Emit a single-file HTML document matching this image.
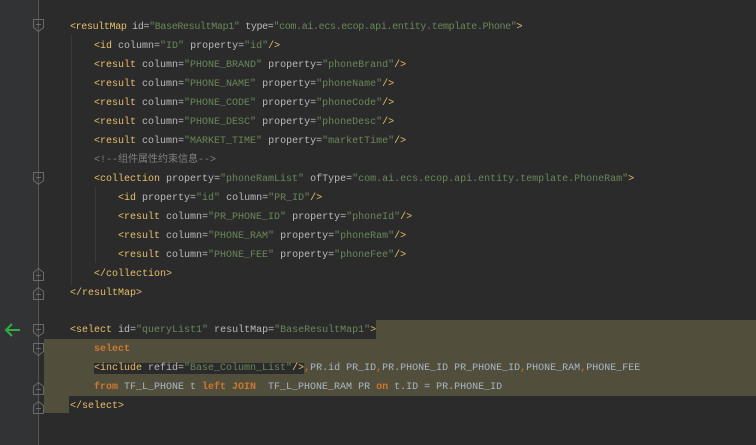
<!DOCTYPE html>
<html><head><meta charset="utf-8"><style>
html,body{margin:0;padding:0;width:756px;height:445px;overflow:hidden;background:#2b2b2b}
.g{position:absolute;left:0;top:0;width:38px;height:445px;background:#313335}
.gl{position:absolute;left:38px;top:0;width:1px;height:445px;background:#555}
.l{position:absolute;height:19px;line-height:19px;font-family:"Liberation Mono","Noto Sans CJK SC",monospace;font-size:10px;color:#a9b7c6;white-space:pre}
.t{color:#e8bf6a}.a{color:#bababa}.v{color:#6a8759}.c{color:#808080}.k{color:#cc7832;font-weight:bold}.p{color:#cc7832}
.dk{background:#2b2b2b}
.hl{position:absolute;background:#514e3b}
.ig{position:absolute;width:1px;background:#3b3b3b}
</style></head><body>
<div class="g"></div><div class="gl"></div>
<div class="hl" style="left:376px;top:320px;width:380px;height:19px"></div>
<div class="hl" style="left:44px;top:339px;width:712px;height:57px"></div>
<div class="hl" style="left:44px;top:396px;width:25px;height:17px"></div>
<div class="ig" style="left:71px;top:35px;height:250px"></div>
<div class="ig" style="left:95px;top:187px;height:76px"></div>
<svg style="position:absolute;left:0;top:0" width="60" height="445">
<g fill="none" stroke="#6a6a6a" stroke-width="1">
<path d="M33.5 19.5h10v8l-5 4l-5-4z M36 24.5h5"/>
<path d="M33.5 172.5h10v8l-5 4l-5-4z M36 177.5h5"/>
<path d="M33.5 280.5h10v-8l-5-4l-5 4z M36 275.5h5"/>
<path d="M33.5 299.5h10v-8l-5-4l-5 4z M36 294.5h5"/>
<path d="M33.5 324.5h10v8l-5 4l-5-4z M36 329.5h5"/>
<path d="M33.5 343.5h10v8l-5 4l-5-4z M36 348.5h5"/>
<path d="M33.5 394.5h10v-8l-5-4l-5 4z M36 389.5h5"/>
<path d="M33.5 413.5h10v-8l-5-4l-5 4z M36 408.5h5"/>
</g>
<path d="M20 330H7M12 324l-6 6l6 6" fill="none" stroke="#2fae46" stroke-width="2"/>
</svg>
<div class="l" style="left:70px;top:18px;letter-spacing:-0.35px"><span class="t">&lt;resultMap </span><span class="a">id=</span><span class="v">"BaseResultMap1"</span> <span class="a">type=</span><span class="v">"com.ai.ecs.ecop.api.entity.template.Phone"</span><span class="t">&gt;</span></div>
<div class="l" style="left:94px;top:37px"><span class="t">&lt;id </span><span class="a">column=</span><span class="v">"ID"</span> <span class="a">property=</span><span class="v">"id"</span><span class="t">/&gt;</span></div>
<div class="l" style="left:94px;top:56px"><span class="t">&lt;result </span><span class="a">column=</span><span class="v">"PHONE_BRAND"</span> <span class="a">property=</span><span class="v">"phoneBrand"</span><span class="t">/&gt;</span></div>
<div class="l" style="left:94px;top:75px"><span class="t">&lt;result </span><span class="a">column=</span><span class="v">"PHONE_NAME"</span> <span class="a">property=</span><span class="v">"phoneName"</span><span class="t">/&gt;</span></div>
<div class="l" style="left:94px;top:94px"><span class="t">&lt;result </span><span class="a">column=</span><span class="v">"PHONE_CODE"</span> <span class="a">property=</span><span class="v">"phoneCode"</span><span class="t">/&gt;</span></div>
<div class="l" style="left:94px;top:113px"><span class="t">&lt;result </span><span class="a">column=</span><span class="v">"PHONE_DESC"</span> <span class="a">property=</span><span class="v">"phoneDesc"</span><span class="t">/&gt;</span></div>
<div class="l" style="left:94px;top:132px"><span class="t">&lt;result </span><span class="a">column=</span><span class="v">"MARKET_TIME"</span> <span class="a">property=</span><span class="v">"marketTime"</span><span class="t">/&gt;</span></div>
<div class="l c" style="left:94px;top:151px">&lt;!--组件属性约束信息--&gt;</div>
<div class="l" style="left:94px;top:170px"><span class="t">&lt;collection </span><span class="a">property=</span><span class="v">"phoneRamList"</span> <span class="a">ofType=</span><span class="v">"com.ai.ecs.ecop.api.entity.template.PhoneRam"</span><span class="t">&gt;</span></div>
<div class="l" style="left:118px;top:189px"><span class="t">&lt;id </span><span class="a">property=</span><span class="v">"id"</span> <span class="a">column=</span><span class="v">"PR_ID"</span><span class="t">/&gt;</span></div>
<div class="l" style="left:118px;top:208px"><span class="t">&lt;result </span><span class="a">column=</span><span class="v">"PR_PHONE_ID"</span> <span class="a">property=</span><span class="v">"phoneId"</span><span class="t">/&gt;</span></div>
<div class="l" style="left:118px;top:227px"><span class="t">&lt;result </span><span class="a">column=</span><span class="v">"PHONE_RAM"</span> <span class="a">property=</span><span class="v">"phoneRam"</span><span class="t">/&gt;</span></div>
<div class="l" style="left:118px;top:246px"><span class="t">&lt;result </span><span class="a">column=</span><span class="v">"PHONE_FEE"</span> <span class="a">property=</span><span class="v">"phoneFee"</span><span class="t">/&gt;</span></div>
<div class="l" style="left:94px;top:265px"><span class="t">&lt;/collection&gt;</span></div>
<div class="l" style="left:70px;top:284px"><span class="t">&lt;/resultMap&gt;</span></div>
<div class="l" style="left:70px;top:321px"><span class="dk"><span class="t">&lt;select </span><span class="a">id=</span><span class="v">"queryList1"</span> <span class="a">resultMap=</span><span class="v">"BaseResultMap1"</span><span class="t">&gt;</span></span></div>
<div class="l" style="left:94px;top:340px"><span class="k">select</span></div>
<div class="l" style="left:94px;top:359px"><span class="dk"><span class="t">&lt;include </span><span class="a">refid=</span><span class="v">"Base_Column_List"</span><span class="t">/&gt;</span></span><span class="p">,</span>PR.id PR_ID<span class="p">,</span>PR.PHONE_ID PR_PHONE_ID<span class="p">,</span>PHONE_RAM<span class="p">,</span>PHONE_FEE</div>
<div class="l" style="left:94px;top:378px"><span class="k">from</span> TF_L_PHONE t <span class="k">left JOIN</span>  TF_L_PHONE_RAM PR <span class="k">on</span> t.ID = PR.PHONE_ID</div>
<div class="l" style="left:70px;top:397px"><span class="t">&lt;/select&gt;</span></div>
</body></html>
